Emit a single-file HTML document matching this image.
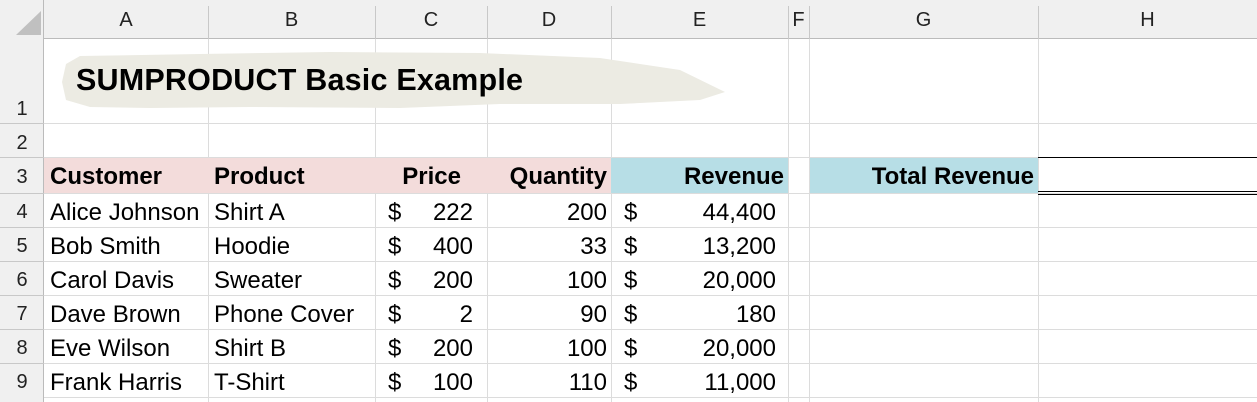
<!DOCTYPE html><html><head><style>
*{margin:0;padding:0;box-sizing:border-box}
body{width:1257px;height:402px;overflow:hidden;background:#fff;font-family:"Liberation Sans",sans-serif;position:relative}
div{position:absolute}
.t{font-size:24px;color:#000;white-space:nowrap;line-height:34px}
.b{font-weight:bold}
.h{font-size:20px;color:#222;text-align:center}
</style></head><body>
<div style="left:0;top:0;width:1257px;height:39px;background:#f0f0f0;border-bottom:1px solid #bbb"></div>
<div style="left:0;top:0;width:44px;height:402px;background:#f0f0f0;border-right:1px solid #bbb"></div>
<svg style="position:absolute;left:0;top:0" width="44" height="39"><polygon points="16,35 41,35 41,11" fill="#c0c0c0"/></svg>
<svg style="position:absolute;left:0;top:0" width="1257" height="402">
<g stroke="#dcdcdc" stroke-width="1">
<line x1="208.5" y1="39" x2="208.5" y2="402"/><line x1="375.5" y1="39" x2="375.5" y2="402"/><line x1="487.5" y1="39" x2="487.5" y2="402"/><line x1="611.5" y1="39" x2="611.5" y2="402"/><line x1="788.5" y1="39" x2="788.5" y2="402"/><line x1="809.5" y1="39" x2="809.5" y2="402"/><line x1="1038.5" y1="39" x2="1038.5" y2="402"/>
<line x1="44" y1="123.5" x2="1257" y2="123.5"/><line x1="44" y1="157.5" x2="1257" y2="157.5"/><line x1="44" y1="193.5" x2="1257" y2="193.5"/><line x1="44" y1="227.5" x2="1257" y2="227.5"/><line x1="44" y1="261.5" x2="1257" y2="261.5"/><line x1="44" y1="295.5" x2="1257" y2="295.5"/><line x1="44" y1="329.5" x2="1257" y2="329.5"/><line x1="44" y1="363.5" x2="1257" y2="363.5"/><line x1="44" y1="397.5" x2="1257" y2="397.5"/>
</g>
<g stroke="#c8c8c8"><line x1="208.5" y1="6" x2="208.5" y2="39"/><line x1="375.5" y1="6" x2="375.5" y2="39"/><line x1="487.5" y1="6" x2="487.5" y2="39"/><line x1="611.5" y1="6" x2="611.5" y2="39"/><line x1="788.5" y1="6" x2="788.5" y2="39"/><line x1="809.5" y1="6" x2="809.5" y2="39"/><line x1="1038.5" y1="6" x2="1038.5" y2="39"/>
<line x1="0" y1="123.5" x2="44" y2="123.5"/><line x1="0" y1="157.5" x2="44" y2="157.5"/><line x1="0" y1="193.5" x2="44" y2="193.5"/><line x1="0" y1="227.5" x2="44" y2="227.5"/><line x1="0" y1="261.5" x2="44" y2="261.5"/><line x1="0" y1="295.5" x2="44" y2="295.5"/><line x1="0" y1="329.5" x2="44" y2="329.5"/><line x1="0" y1="363.5" x2="44" y2="363.5"/></g>
<path d="M66,64 L80,56 L200,54 L330,52 L480,53 L600,58 L680,70 L725,92 L700,100 L620,104 L500,104 L400,108 L250,107 L150,108 L90,107 L66,100 L62,82 Z" fill="#ecebe3"/>
<rect x="44" y="158" width="567" height="35" fill="#f3dcdb"/>
<rect x="611" y="158" width="177" height="35" fill="#b7dee6"/>
<rect x="810" y="158" width="228" height="35" fill="#b7dee6"/>
<line x1="1038" y1="157.5" x2="1257" y2="157.5" stroke="#000"/>
<line x1="1038" y1="191.5" x2="1257" y2="191.5" stroke="#000"/>
<line x1="1038" y1="194.5" x2="1257" y2="194.5" stroke="#000"/>
</svg>
<div class="h" style="left:44px;width:164px;top:9px">A</div><div class="h" style="left:208px;width:167px;top:9px">B</div><div class="h" style="left:375px;width:112px;top:9px">C</div><div class="h" style="left:487px;width:124px;top:9px">D</div><div class="h" style="left:611px;width:177px;top:9px">E</div><div class="h" style="left:788px;width:21px;top:9px">F</div><div class="h" style="left:809px;width:229px;top:9px">G</div><div class="h" style="left:1038px;width:219px;top:9px">H</div>
<div class="h" style="left:0;width:44px;top:98px">1</div><div class="h" style="left:0;width:44px;top:132px">2</div><div class="h" style="left:0;width:44px;top:166px">3</div><div class="h" style="left:0;width:44px;top:201px">4</div><div class="h" style="left:0;width:44px;top:235px">5</div><div class="h" style="left:0;width:44px;top:269px">6</div><div class="h" style="left:0;width:44px;top:303px">7</div><div class="h" style="left:0;width:44px;top:337px">8</div><div class="h" style="left:0;width:44px;top:371px">9</div>
<div class="t b" style="left:76px;top:63px;font-size:30.5px;letter-spacing:0.2px">SUMPRODUCT Basic Example</div>
<div style="left:0;top:2px">
<div class="t b" style="left:50px;top:158px">Customer</div>
<div class="t b" style="left:214px;top:158px">Product</div>
<div class="t b" style="left:375px;width:86px;text-align:right;top:158px">Price</div>
<div class="t b" style="left:487px;width:120px;text-align:right;top:158px">Quantity</div>
<div class="t b" style="left:611px;width:173px;text-align:right;top:158px">Revenue</div>
<div class="t b" style="left:810px;width:224px;text-align:right;top:158px">Total Revenue</div>
</div>
<div style="left:0;top:196px">
<div class="t" style="left:50px;top:0">Alice Johnson</div><div class="t" style="left:214px;top:0">Shirt A</div><div class="t" style="left:388px;top:0">$</div><div class="t" style="left:375px;width:98px;text-align:right;top:0">222</div><div class="t" style="left:487px;width:120px;text-align:right;top:0">200</div><div class="t" style="left:624px;top:0">$</div><div class="t" style="left:611px;width:165px;text-align:right;top:0">44,400</div>
<div class="t" style="left:50px;top:34px">Bob Smith</div><div class="t" style="left:214px;top:34px">Hoodie</div><div class="t" style="left:388px;top:34px">$</div><div class="t" style="left:375px;width:98px;text-align:right;top:34px">400</div><div class="t" style="left:487px;width:120px;text-align:right;top:34px">33</div><div class="t" style="left:624px;top:34px">$</div><div class="t" style="left:611px;width:165px;text-align:right;top:34px">13,200</div>
<div class="t" style="left:50px;top:68px">Carol Davis</div><div class="t" style="left:214px;top:68px">Sweater</div><div class="t" style="left:388px;top:68px">$</div><div class="t" style="left:375px;width:98px;text-align:right;top:68px">200</div><div class="t" style="left:487px;width:120px;text-align:right;top:68px">100</div><div class="t" style="left:624px;top:68px">$</div><div class="t" style="left:611px;width:165px;text-align:right;top:68px">20,000</div>
<div class="t" style="left:50px;top:102px">Dave Brown</div><div class="t" style="left:214px;top:102px">Phone Cover</div><div class="t" style="left:388px;top:102px">$</div><div class="t" style="left:375px;width:98px;text-align:right;top:102px">2</div><div class="t" style="left:487px;width:120px;text-align:right;top:102px">90</div><div class="t" style="left:624px;top:102px">$</div><div class="t" style="left:611px;width:165px;text-align:right;top:102px">180</div>
<div class="t" style="left:50px;top:136px">Eve Wilson</div><div class="t" style="left:214px;top:136px">Shirt B</div><div class="t" style="left:388px;top:136px">$</div><div class="t" style="left:375px;width:98px;text-align:right;top:136px">200</div><div class="t" style="left:487px;width:120px;text-align:right;top:136px">100</div><div class="t" style="left:624px;top:136px">$</div><div class="t" style="left:611px;width:165px;text-align:right;top:136px">20,000</div>
<div class="t" style="left:50px;top:170px">Frank Harris</div><div class="t" style="left:214px;top:170px">T-Shirt</div><div class="t" style="left:388px;top:170px">$</div><div class="t" style="left:375px;width:98px;text-align:right;top:170px">100</div><div class="t" style="left:487px;width:120px;text-align:right;top:170px">110</div><div class="t" style="left:624px;top:170px">$</div><div class="t" style="left:611px;width:165px;text-align:right;top:170px">11,000</div>
</div>
</body></html>
